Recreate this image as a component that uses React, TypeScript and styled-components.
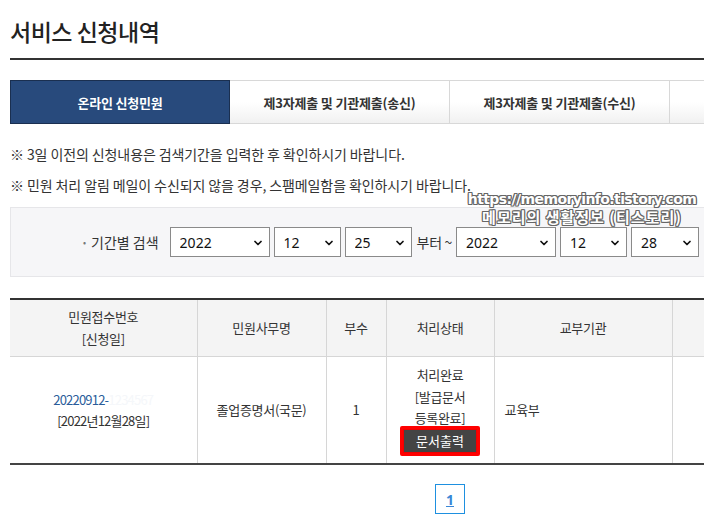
import React from "react";
import styled, { createGlobalStyle } from "styled-components";
import { ChevronDown } from "lucide-react";

const GlobalStyle = createGlobalStyle`
  html, body {
    margin: 0;
    padding: 0;
    background: #fff;
    overflow: hidden;
  }
  body {
    font-family: "Noto Sans CJK KR", "Noto Sans", sans-serif;
    color: #333;
  }
`;

const Page = styled.div`
  position: relative;
  width: 890px;
  padding: 14px 0 0 10px;
`;

const Title = styled.h2`
  margin: 0;
  padding: 0 0 10px;
  font-size: 23px;
  font-weight: 500;
  line-height: 34px;
  letter-spacing: -0.5px;
  color: #222;
  border-bottom: 2px solid #333;
`;

const Tabs = styled.ul`
  display: flex;
  margin: 20px 0 0;
  padding: 0;
  list-style: none;
`;

const Tab = styled.li<{ $active?: boolean }>`
  flex: 0 0 220px;
  height: 44px;
  box-sizing: border-box;
  display: flex;
  align-items: center;
  justify-content: center;
  font-size: 13px;
  font-weight: 700;
  letter-spacing: -0.2px;
  color: ${(p) => (p.$active ? "#fff" : "#333")};
  background: ${(p) =>
    p.$active ? "#284a7c" : "linear-gradient(#ffffff, #ffffff 50%, #f1f1f1)"};
  border: 1px solid ${(p) => (p.$active ? "#1a2f50" : "#d8d8d8")};
  border-left-width: ${(p) => (p.$active ? "1px" : "0")};
`;

const Notes = styled.div`
  margin-top: 20px;
  display: flex;
  flex-direction: column;
  gap: 10px;
`;

const Note = styled.p`
  margin: 0;
  font-size: 14px;
  line-height: 21px;
  letter-spacing: -0.1px;
  color: #333;
`;

const SearchBox = styled.div`
  margin-top: 11px;
  height: 70px;
  box-sizing: border-box;
  display: flex;
  align-items: center;
  padding-left: 72px;
  gap: 4px;
  background: #f6f6f8;
  border: 1px solid #e6e6e9;
`;

const Label = styled.span`
  font-size: 14px;
  color: #333;
  margin-right: 7px;
  letter-spacing: 0;

  &::before {
    content: "•";
    color: #777;
    font-size: 9px;
    margin-right: 5px;
    vertical-align: 2px;
  }
`;

const SelectWrap = styled.span<{ $w: number }>`
  position: relative;
  display: inline-block;
  width: ${(p) => p.$w}px;
  height: 30px;

  & svg {
    position: absolute;
    right: 6px;
    top: 10px;
    pointer-events: none;
    color: #111;
  }
`;

const Select = styled.select`
  appearance: none;
  width: 100%;
  height: 100%;
  box-sizing: border-box;
  border: 1px solid #8a8a8a;
  border-radius: 0;
  background: #fff;
  padding: 0 0 0 9px;
  font-family: "Noto Sans", "Noto Sans CJK KR", sans-serif;
  font-size: 14px;
  color: #111;
`;

const Between = styled.span`
  font-size: 14px;
  color: #333;
  margin: 0 0 0 1px;
  letter-spacing: -0.3px;
`;

const Table = styled.table`
  margin-top: 21px;
  width: 890px;
  border-collapse: collapse;
  table-layout: fixed;
  border-top: 2px solid #333;
  border-bottom: 2px solid #444;
  font-size: 13px;
  letter-spacing: -0.3px;

  th,
  td {
    border-left: 1px solid #d6d6d6;
    text-align: center;
    vertical-align: middle;
    padding: 0;
  }
  th:first-child,
  td:first-child {
    border-left: 0;
  }
  th {
    height: 56px;
    background: #f4f4f4;
    font-weight: 400;
    color: #333;
    line-height: 22px;
    border-bottom: 1px solid #d6d6d6;
  }
  td {
    height: 106px;
    color: #333;
    line-height: 21.5px;
  }
`;

const LeftCell = styled.td`
  && {
    text-align: left;
    padding-left: 10px;
  }
`;

const ReceiptNo = styled.span`
  color: #2a5c9a;
  letter-spacing: -0.8px;
`;

// masked part of the receipt number, nearly invisible in the capture
const Hidden = styled.span`
  color: #f5f7fa;
`;

const DateLine = styled.span`
  letter-spacing: -0.8px;
`;

const PrintButton = styled.button`
  display: block;
  margin: -3px auto 0;
  box-sizing: border-box;
  width: 80px;
  height: 30px;
  padding: 0;
  background: #444;
  color: #fff;
  font-family: inherit;
  font-size: 13px;
  line-height: 22px;
  border: 3px solid #ff0000;
  border-radius: 2px;
  box-shadow: inset 0 0 0 1px #e00;
  cursor: pointer;
`;

const Paging = styled.div`
  display: flex;
  justify-content: center;
  margin-top: 19px;
  width: 880px;
`;

const PageNum = styled.a`
  display: flex;
  align-items: center;
  justify-content: center;
  width: 30px;
  height: 30px;
  box-sizing: border-box;
  border: 1px solid #1e90e0;
  color: #3a86d6;
  font-family: "Noto Sans", sans-serif;
  font-weight: 700;
  font-size: 14px;
  text-decoration: underline;
`;

const Watermark = styled.div`
  position: absolute;
  left: 458px;
  top: 191px;
  width: 248px;
  text-align: center;
  font-family: "DejaVu Sans", "Noto Sans CJK KR", sans-serif;
  font-weight: 700;
  color: #fff;
  text-shadow: -1px -1px 0 #666, 1px -1px 0 #666, -1px 1px 0 #666,
    1px 1px 0 #666, 0 1px 0 #666, 0 -1px 0 #666, 1px 0 0 #666, -1px 0 0 #666;
`;

const WmUrl = styled.div`
  font-size: 14px;
  line-height: 17px;
  letter-spacing: -0.6px;
  white-space: nowrap;
`;

const WmName = styled.div`
  font-size: 15px;
  line-height: 17px;
  font-family: "Noto Sans CJK KR", sans-serif;
  letter-spacing: 1px;
  white-space: nowrap;
`;

const DateSelect = ({ w, value, options }: { w: number; value: string; options: string[] }) => (
  <SelectWrap $w={w}>
    <Select defaultValue={value}>
      {options.map((o) => (
        <option key={o} value={o}>
          {o}
        </option>
      ))}
    </Select>
    <ChevronDown size={12} strokeWidth={3.5} />
  </SelectWrap>
);

const years = ["2020", "2021", "2022"];
const months = Array.from({ length: 12 }, (_, i) => String(i + 1).padStart(2, "0"));
const days = Array.from({ length: 31 }, (_, i) => String(i + 1).padStart(2, "0"));

export default function App() {
  return (
    <>
      <GlobalStyle />
      <Page>
        <Title>서비스 신청내역</Title>

        <Tabs>
          <Tab $active>온라인 신청민원</Tab>
          <Tab>제3자제출 및 기관제출(송신)</Tab>
          <Tab>제3자제출 및 기관제출(수신)</Tab>
          <Tab />
        </Tabs>

        <Notes>
          <Note>※ 3일 이전의 신청내용은 검색기간을 입력한 후 확인하시기 바랍니다.</Note>
          <Note>※ 민원 처리 알림 메일이 수신되지 않을 경우, 스팸메일함을 확인하시기 바랍니다.</Note>
        </Notes>

        <SearchBox>
          <Label>기간별 검색</Label>
          <DateSelect w={100} value="2022" options={years} />
          <DateSelect w={67} value="12" options={months} />
          <DateSelect w={67} value="25" options={days} />
          <Between>부터 ~</Between>
          <DateSelect w={100} value="2022" options={years} />
          <DateSelect w={67} value="12" options={months} />
          <DateSelect w={68} value="28" options={days} />
        </SearchBox>

        <Table>
          <colgroup>
            <col style={{ width: 187 }} />
            <col style={{ width: 129 }} />
            <col style={{ width: 60 }} />
            <col style={{ width: 108 }} />
            <col style={{ width: 178 }} />
            <col />
          </colgroup>
          <thead>
            <tr>
              <th>
                민원접수번호
                <br />
                [신청일]
              </th>
              <th>민원사무명</th>
              <th>부수</th>
              <th>처리상태</th>
              <th>교부기관</th>
              <th />
            </tr>
          </thead>
          <tbody>
            <tr>
              <td>
                <ReceiptNo>
                  20220912-<Hidden>1234567</Hidden>
                </ReceiptNo>
                <br />
                <DateLine>[2022년12월28일]</DateLine>
              </td>
              <td>졸업증명서(국문)</td>
              <td>1</td>
              <td>
                처리완료
                <br />
                [발급문서
                <br />
                등록완료]
                <PrintButton>문서출력</PrintButton>
              </td>
              <LeftCell>교육부</LeftCell>
              <td />
            </tr>
          </tbody>
        </Table>

        <Paging>
          <PageNum>1</PageNum>
        </Paging>

        <Watermark>
          <WmUrl>https://memoryinfo.tistory.com</WmUrl>
          <WmName>메모리의 생활정보 (티스토리)</WmName>
        </Watermark>
      </Page>
    </>
  );
}
